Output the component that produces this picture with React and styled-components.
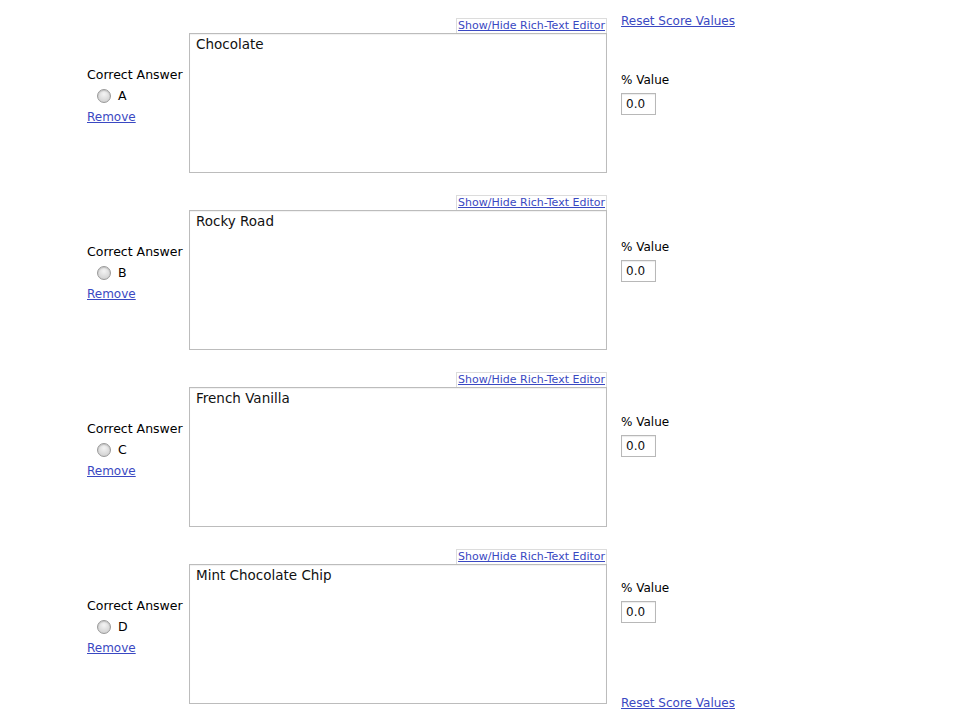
import React from "react";
import styled, { createGlobalStyle } from "styled-components";

const answers = [
  { letter: "A", text: "Chocolate", valueTop: 42, resetTop: true },
  { letter: "B", text: "Rocky Road", valueTop: 43 },
  { letter: "C", text: "French Vanilla", valueTop: 41 },
  { letter: "D", text: "Mint Chocolate Chip", valueTop: 30, resetBottom: true },
];

const GlobalStyle = createGlobalStyle`
  html, body {
    margin: 0;
    background: #ffffff;
  }
  body {
    font-family: "DejaVu Sans", Verdana, sans-serif;
    color: #000;
  }
`;

const Page = styled.div`
  width: 960px;
  height: 720px;
  overflow: hidden;
  padding: 18px 0 0 87px;
  box-sizing: border-box;
  display: flex;
  flex-direction: column;
  gap: 22px;
`;

const Row = styled.div`
  display: grid;
  grid-template-columns: 102px 418px 1fr;
`;

const Side = styled.div`
  align-self: center;
  display: flex;
  flex-direction: column;
  align-items: flex-start;
  font-size: 12.5px;
  line-height: 21px;
  padding-top: 2px;
`;

const Choice = styled.label`
  display: flex;
  align-items: center;
  gap: 7px;
  padding-left: 10px;
`;

const Radio = styled.span`
  width: 12px;
  height: 12px;
  border-radius: 50%;
  border: 1px solid #9a9a9a;
  background: radial-gradient(circle at 50% 35%, #f4f4f4 0%, #d6d6d6 70%, #c4c4c4 100%);
  box-shadow: inset 0 1px 1px rgba(0, 0, 0, 0.15);
`;

const Link = styled.a`
  color: #3a48c2;
  text-decoration: underline;
  cursor: pointer;
  font-size: 12px;
  white-space: nowrap;
`;

const Remove = styled(Link)`
  line-height: 23px;
`;

const Middle = styled.div`
  display: flex;
  flex-direction: column;
`;

const EditorToggle = styled(Link)`
  align-self: flex-end;
  font-size: 11px;
  line-height: 14px;
  border: 1px solid #dcdcdc;
  border-bottom: none;
  padding: 0 1px;
`;

const Editor = styled.textarea`
  width: 418px;
  height: 140px;
  box-sizing: border-box;
  border: 1px solid #bcbcbc;
  box-shadow: inset 0 1px 1px rgba(0, 0, 0, 0.06);
  padding: 2px 6px;
  font-family: "DejaVu Sans", Verdana, sans-serif;
  font-size: 13.5px;
  color: #111;
  resize: none;
  outline: none;
  margin: 0;
  display: block;
`;

const Score = styled.div`
  display: flex;
  flex-direction: column;
  align-items: flex-start;
  padding-left: 14px;
  font-size: 12px;
  line-height: 18px;
`;

const ValueLabel = styled.span`
  margin-top: ${(p) => p.$top}px;
`;

const Reset = styled(Link)`
  line-height: 15px;
  margin-top: ${(p) => (p.$bottom ? "auto" : "-4px")};
  margin-bottom: ${(p) => (p.$bottom ? "-7px" : "0")};
`;

const ValueInput = styled.input`
  width: 35px;
  height: 22px;
  box-sizing: border-box;
  border: 1px solid #b8b8b8;
  box-shadow: inset 0 1px 1px rgba(0, 0, 0, 0.08);
  padding: 0 4px;
  margin: 4px 0 0;
  font-family: "DejaVu Sans", Verdana, sans-serif;
  font-size: 12px;
  color: #111;
  outline: none;
`;

const App = () => {
  return (
    <>
      <GlobalStyle />
      <Page>
        {answers.map((a) => (
          <Row key={a.letter}>
            <Side>
              <span>Correct Answer</span>
              <Choice>
                <Radio />
                {a.letter}
              </Choice>
              <Remove>Remove</Remove>
            </Side>
            <Middle>
              <EditorToggle>Show/Hide Rich-Text Editor</EditorToggle>
              <Editor defaultValue={a.text} />
            </Middle>
            <Score>
              {a.resetTop && <Reset>Reset Score Values</Reset>}
              <ValueLabel $top={a.valueTop}>% Value</ValueLabel>
              <ValueInput defaultValue="0.0" />
              {a.resetBottom && <Reset $bottom>Reset Score Values</Reset>}
            </Score>
          </Row>
        ))}
      </Page>
    </>
  );
};

export default App;
